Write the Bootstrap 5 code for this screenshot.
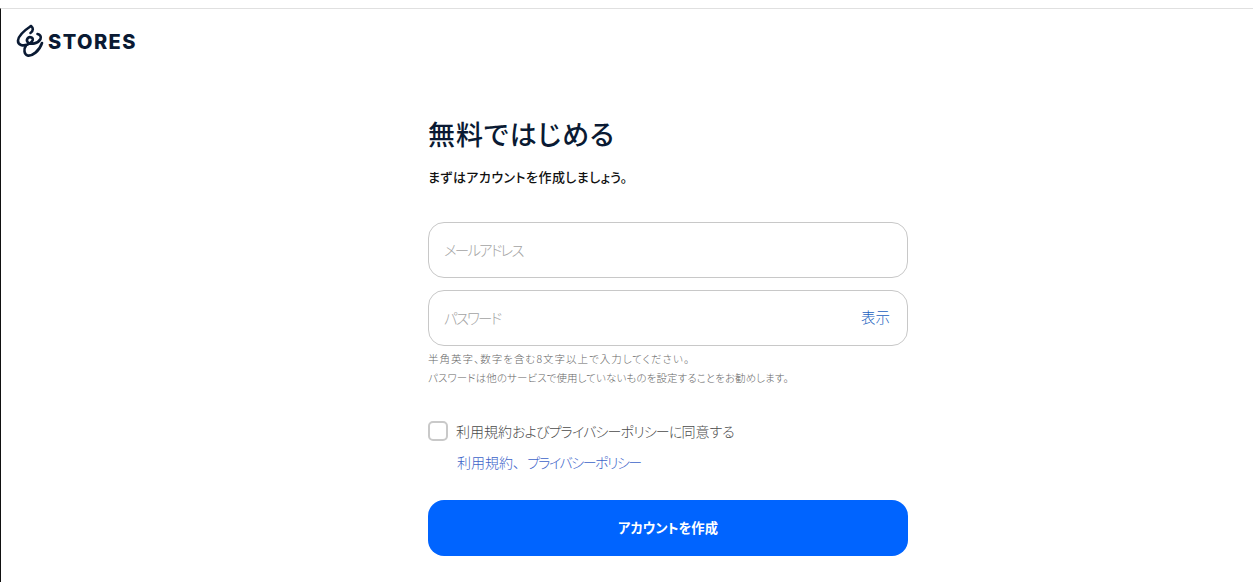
<!DOCTYPE html>
<html lang="ja">
<head>
<meta charset="utf-8">
<title>STORES</title>
<link href="https://cdn.jsdelivr.net/npm/bootstrap@5.3.0/dist/css/bootstrap.min.css" rel="stylesheet">
<style>
html,body{height:100%;overflow:hidden}
body{font-family:"Noto Sans CJK JP","Noto Sans",sans-serif;background:#fff;color:#0b1a33;font-feature-settings:"palt"}
.page-frame{height:582px;padding-top:8px}
.page-inner{height:574px;border-top:1px solid #e0e0e0;border-left:1px solid #111}
.brand-row{height:66px;padding:15px 0 0 15px;gap:4px}
.brand-name{font-family:Inter,"Liberation Sans",sans-serif;font-weight:800;font-size:20px;line-height:36px;color:#0a1a33;letter-spacing:1.45px}
.form-box{width:480px;margin-left:427px;padding-top:35px}
.form-title{font-size:27px;font-weight:500;line-height:48px;margin:0;color:#0a1a33;letter-spacing:.9px}
.form-lead{font-size:13px;font-weight:500;line-height:20px;margin:9px 0 0;color:#111;letter-spacing:.45px}
.field-wrap{height:56px}
.field-input.form-control{height:56px;border:1px solid #c8c8c8;border-radius:16px;padding:0 60px 2px 15px;font-size:14.5px;font-weight:300;color:#333;box-shadow:none;font-feature-settings:"palt"}
.field-input::placeholder{color:#a3a3a3;letter-spacing:-1.8px}
.first-field{margin-top:35px}
.second-field{margin-top:12px}
.show-link{position:absolute;right:18px;top:50%;transform:translateY(-50%);font-size:14.5px;font-weight:300;color:#1a5fc0;text-decoration:none;margin-top:-1px}
.field-note{font-size:10.5px;line-height:19px;color:#666;margin:3px 0 0;font-weight:300}
.note-wide{letter-spacing:1px}
.note-slim{letter-spacing:.08px}
.agree-row{margin-top:32px;gap:8px;height:24px}
.agree-box.form-check-input{width:20px;height:20px;margin:0;border:2px solid #c9c9c9;border-radius:5px;flex:none}
.agree-label{font-size:14px;font-weight:300;color:#4b4b4b;line-height:24px}
.kana-tight{letter-spacing:-.85px}
.kana-tighter{letter-spacing:-1.5px}
.terms-line{margin:7px 0 0 29px;font-size:14px;font-weight:300;line-height:24px}
.terms-line a{color:#3d63c9;text-decoration:none}
.terms-comma{margin-right:7px}
.submit-btn.btn{display:block;width:100%;height:56px;margin-top:26px;background:#0064ff;border:0;border-radius:16px;color:#fff;font-size:13.3px;font-weight:700;font-feature-settings:"palt"}
</style>
</head>
<body>
<div class="page-frame">
<div class="page-inner">
  <div class="brand-row d-flex align-items-start">
    <svg width="28" height="34" viewBox="0 0 28 34" fill="none" stroke="#0a1a33" stroke-width="2.6" stroke-linecap="round" stroke-linejoin="round" aria-hidden="true">
      <path d="M15 2 C9 6 2.500 11 2 16.500 C1.700 21 7 22.500 11.500 20.500 C16 18.500 18.500 15 15.500 13.500 C12 12 9.500 16 12 18.500 C15 21 22 19.500 24.500 15 C25.500 12.500 24 10.500 21.500 10"/>
      <path d="M15 2 C17.500 3.500 17.500 7 14.500 9"/>
      <path d="M10 21.500 C7.500 25 8 30.500 11.500 31.500 C16 32.500 23.500 27 26 19"/>
    </svg>
    <span class="brand-name">STORES</span>
  </div>
  <main class="form-box">
    <h1 class="form-title">無料ではじめる</h1>
    <p class="form-lead">まずはアカウントを作成しましょう。</p>
    <form>
      <div class="field-wrap first-field">
        <input class="form-control field-input" type="email" placeholder="メールアドレス" aria-label="メールアドレス">
      </div>
      <div class="field-wrap second-field position-relative">
        <input class="form-control field-input" type="password" placeholder="パスワード" aria-label="パスワード">
        <a class="show-link" href="#">表示</a>
      </div>
      <p class="field-note"><span class="note-wide">半角英字、数字を含む8文字以上で入力してください。</span><br><span class="note-slim">パスワードは他のサービスで使用していないものを設定することをお勧めします。</span></p>
      <div class="agree-row d-flex align-items-center">
        <input class="form-check-input agree-box" type="checkbox" id="agree">
        <label class="agree-label" for="agree">利用規約<span class="kana-tight">およびプライバシーポリシーに</span>同意する</label>
      </div>
      <p class="terms-line"><a href="#">利用規約<span class="terms-comma">、</span></a><a href="#"><span class="kana-tighter">プライバシーポリシー</span></a></p>
      <button class="btn submit-btn" type="button">アカウントを作成</button>
    </form>
  </main>
</div>
</div>
<script src="https://cdn.jsdelivr.net/npm/bootstrap@5.3.0/dist/js/bootstrap.bundle.min.js"></script>
</body>
</html>
